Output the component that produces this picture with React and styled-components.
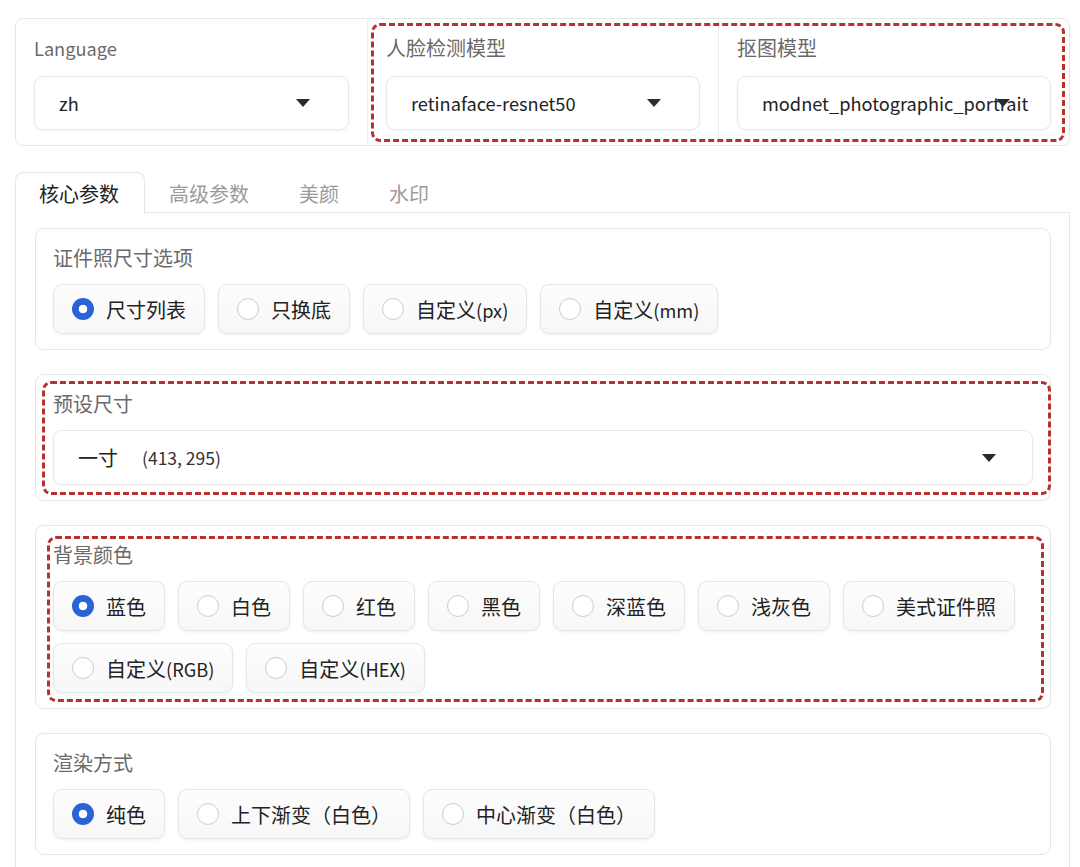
import React from "react";
import styled, { createGlobalStyle } from "styled-components";

const Global = createGlobalStyle`
  html, body { margin: 0; padding: 0; background: #ffffff; }
  body { font-family: "Noto Sans CJK SC", "Noto Sans", sans-serif; color: #222; }
  * { box-sizing: border-box; }
`;

const Page = styled.div`
  padding: 18px 10px 0 15px;
  display: flex;
  flex-direction: column;
`;

const TopCard = styled.div`
  position: relative;
  display: grid;
  grid-template-columns: repeat(3, 1fr);
  border: 1px solid #e7e7e7;
  border-radius: 8px;
  background: #fff;
`;

const Column = styled.div`
  padding: 15px 18px;
  display: flex;
  flex-direction: column;
  gap: 14px;
  border-left: ${(p) => (p.$first ? "none" : "1px solid #ececec")};
  min-width: 0;
`;

const Label = styled.div`
  font-size: 20px;
  line-height: 28px;
  color: #6a6a6a;
`;

const Latin = styled.span`
  font-size: ${(p) => p.$size || "0.91em"};
`;

const Select = styled.div`
  position: relative;
  height: ${(p) => p.$h || 54}px;
  border: 1px solid #e9e9e9;
  border-radius: 9px;
  background: #fff;
  box-shadow: 0 1px 3px rgba(0, 0, 0, 0.05);
  display: flex;
  align-items: center;
  padding: 0 24px;
  overflow: hidden;
  white-space: nowrap;
  font-size: 18.2px;
  color: #222;
`;

const Arrow = styled.svg`
  position: absolute;
  right: ${(p) => p.$right || 38}px;
  top: 50%;
  margin-top: -4px;
`;

const Dashed = styled.div`
  position: absolute;
  left: ${(p) => p.$l}px;
  top: ${(p) => p.$t}px;
  width: ${(p) => p.$w}px;
  height: ${(p) => p.$h}px;
  border: 3px dashed #b8302f;
  border-radius: 9px;
  pointer-events: none;
`;

const Tabs = styled.div`
  margin-top: 26px;
  display: flex;
  flex-direction: column;
`;

const TabBar = styled.div`
  display: flex;
  height: 41px;
  border-bottom: 1px solid #e7e7e7;
`;

const Tab = styled.div`
  padding: 0 25px 0 23px;
  display: flex;
  align-items: center;
  font-size: 20px;
  color: ${(p) => (p.$active ? "#222" : "#9b9b9b")};
  background: ${(p) => (p.$active ? "#fff" : "transparent")};
  border: 1px solid ${(p) => (p.$active ? "#e7e7e7" : "transparent")};
  border-bottom: none;
  border-radius: 8px 8px 0 0;
  margin-bottom: ${(p) => (p.$active ? "-1px" : "0")};
  height: ${(p) => (p.$active ? 42 : 41)}px;
`;

const Panel = styled.div`
  border: 1px solid #e7e7e7;
  border-top: none;
  padding: 15px 18px 30px 19px;
  display: flex;
  flex-direction: column;
  gap: 24px;
`;

const Block = styled.div`
  position: relative;
  border: 1px solid #e7e7e7;
  border-radius: 9px;
  padding: 15px 17px;
  display: flex;
  flex-direction: column;
  gap: 12px;
  background: #fff;
`;

const RadioGroup = styled.div`
  display: flex;
  flex-wrap: wrap;
  gap: 12px 13px;
`;

const RadioItem = styled.div`
  height: 50px;
  display: flex;
  align-items: center;
  gap: 12px;
  padding: 0 18px;
  border: 1px solid #e6e6e6;
  border-radius: 9px;
  background: linear-gradient(#fdfdfd, #f7f7f7);
  box-shadow: 0 1px 3px rgba(0, 0, 0, 0.06);
  font-size: 20px;
  color: #222;
  white-space: nowrap;
`;

const Dot = styled.span`
  width: 22px;
  height: 22px;
  border-radius: 50%;
  flex: none;
  ${(p) =>
    p.$checked
      ? `background: radial-gradient(circle, #fff 0 4px, #2a63d6 4.6px);`
      : `background: #fff; border: 1px solid #cdcdcd;`}
`;

const Big = styled.span`
  font-size: 20px;
`;

const Small = styled.span`
  font-size: 17.5px;
  margin-left: 24px;
  color: #333;
`;

const mixed = (text) =>
  text.split(/([\x20-\x7E]+)/).map((part, i) =>
    /[\x20-\x7E]/.test(part) ? <Latin key={i}>{part}</Latin> : part
  );

const Caret = ({ right }) => (
  <Arrow $right={right} width="14" height="8" viewBox="0 0 14 8">
    <path d="M0 0 L14 0 L7 8 Z" fill="#2b2b2b" />
  </Arrow>
);

const Radio = ({ label, checked }) => (
  <RadioItem>
    <Dot $checked={checked} />
    <span>{mixed(label)}</span>
  </RadioItem>
);

const RadioBlock = ({ title, options, children }) => (
  <Block>
    <Label>{title}</Label>
    <RadioGroup>
      {options.map((o, i) => (
        <Radio key={o} label={o} checked={i === 0} />
      ))}
    </RadioGroup>
    {children}
  </Block>
);

export default function App() {
  return (
    <>
      <Global />
      <Page>
        <TopCard>
          <Column $first>
            <Label>{mixed("Language")}</Label>
            <Select>
              zh
              <Caret />
            </Select>
          </Column>
          <Column>
            <Label>人脸检测模型</Label>
            <Select>
              retinaface-resnet50
              <Caret />
            </Select>
          </Column>
          <Column>
            <Label>抠图模型</Label>
            <Select>
              modnet_photographic_portrait
              <Caret right={40} />
            </Select>
          </Column>
          <Dashed $l={355} $t={4} $w={694} $h={119} />
        </TopCard>

        <Tabs>
          <TabBar>
            <Tab $active>核心参数</Tab>
            <Tab>高级参数</Tab>
            <Tab>美颜</Tab>
            <Tab>水印</Tab>
          </TabBar>
          <Panel>
            <RadioBlock
              title="证件照尺寸选项"
              options={["尺寸列表", "只换底", "自定义(px)", "自定义(mm)"]}
            />
            <Block>
              <Label>预设尺寸</Label>
              <Select $h={55}>
                <Big>一寸</Big>
                <Small>(413, 295)</Small>
                <Caret right={36} />
              </Select>
              <Dashed $l={6} $t={6} $w={1009} $h={114} />
            </Block>
            <RadioBlock
              title="背景颜色"
              options={[
                "蓝色",
                "白色",
                "红色",
                "黑色",
                "深蓝色",
                "浅灰色",
                "美式证件照",
                "自定义(RGB)",
                "自定义(HEX)",
              ]}
            >
              <Dashed $l={11} $t={10} $w={997} $h={166} />
            </RadioBlock>
            <RadioBlock
              title="渲染方式"
              options={["纯色", "上下渐变（白色）", "中心渐变（白色）"]}
            />
          </Panel>
        </Tabs>
      </Page>
    </>
  );
}
